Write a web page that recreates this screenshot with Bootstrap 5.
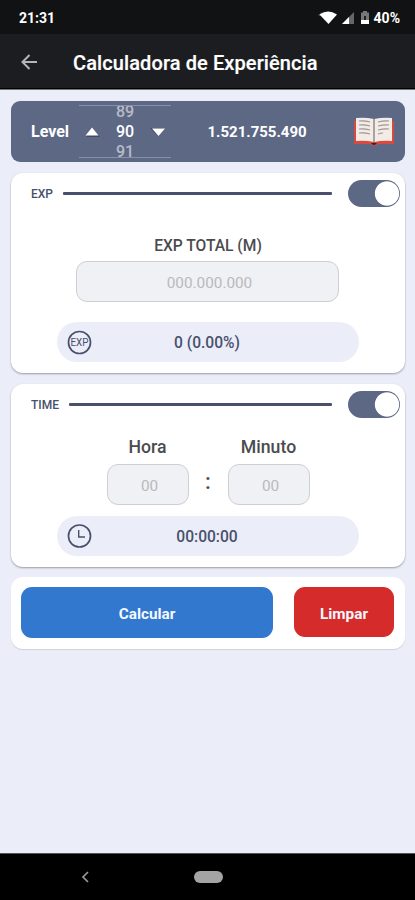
<!DOCTYPE html>
<html lang="pt-BR">
<head>
<meta charset="utf-8">
<meta name="viewport" content="width=device-width, initial-scale=1">
<title>Calculadora de Experiência</title>
<link href="https://cdn.jsdelivr.net/npm/bootstrap@5.3.0/dist/css/bootstrap.min.css" rel="stylesheet">
<style>
:root{--slate:#5d6885;--ink:#48506c;--haze:#ebedf9}
body{font-family:Roboto,"Liberation Sans",sans-serif;background:var(--haze);height:900px;overflow:hidden;line-height:1}
svg{display:block;flex:none}
.status{height:34px;background:#111213;padding:2px 15px 0 19px;font-size:14px;font-weight:700}
.battery{margin:0 3px 0 4px}
.appbar{height:56px;background:#1b1d20;border-bottom:1px solid #777;box-shadow:inset 0 -1px #000;padding:0 20px}
.appbar h1{font-size:20px;font-weight:500;margin:0 0 0 33px;padding-top:2px;letter-spacing:.1px;-webkit-text-stroke:.2px}
main{padding:11px 10px 0 11px}
.panel{border:0;border-radius:12px;box-shadow:0 1px 2px rgba(0,0,0,.35)}
.level{height:61px;background:var(--slate);border-radius:9px;padding:0 10px 0 20px;margin-bottom:11px;font-weight:700}
.level-name{padding-top:1px}
.wheel{width:92px;height:53px;margin-left:10px;font-weight:500;font-size:16px;border-top:1px solid #8790a8;border-bottom:1px solid #8790a8}
.digits{height:51px;width:24px;overflow:hidden;padding-top:1px}
.digits span{flex:none;height:20px;line-height:20px}
.dim{opacity:.55}
.total{font-size:15px;width:112px;margin-left:30px;padding-top:2px}
.exp{height:200px;margin-bottom:11px}
.time{height:183px;margin-bottom:10px}
.actions{height:72px;padding:10px 11px 0 10px;box-shadow:0 1px 1px rgba(0,0,0,.12)}
.headrow{height:40px;padding:0 5px 0 20px;color:var(--ink);font-size:12px;font-weight:500}
.headrow span{padding-top:1px}
.rule{height:3px;background:var(--ink);border-radius:1px;margin:0 16px 0 10px}
.toggle.form-check-input{width:52px;height:27px;margin:0;border:0;background:var(--slate);flex:none;appearance:none;border-radius:14px;padding:1px}
.toggle.form-check-input:checked{background:radial-gradient(circle at 39px 13.5px,#fff 11.7px,var(--slate) 12.6px)}
.lbl{font-size:16px;font-weight:500;color:#4b4b4e}
.exp .lbl{height:24px;margin-bottom:0;padding-top:2px;font-size:15.6px}
.field.form-control{height:41px;border:1.5px solid #cdcfd2;border-radius:11px;background:#f0f1f4;text-align:center;font-size:15.3px;padding:2px 4px 0 8px;color:#777}
.field::placeholder{color:#b8babd;opacity:1}
.wide{width:263px}
.exp .field{margin-left:65px}
.narrow{width:82px}
.time .pair{margin-top:15px}
.time .big{font-size:17.7px;height:25px}
.time .colon{width:39px;height:41px;font-size:22px;line-height:36px}
.result{width:302px;height:40px;margin-left:46px;background:var(--haze);color:var(--ink);font-size:15.6px;font-weight:500;padding-left:9px}
.result output{width:230px;padding-top:3px}
.exp .result{margin-top:20px}
.time .result{margin-top:11px}
.go,.wipe{border:0;border-radius:11px;font-size:15.3px;font-weight:700;color:#f5f8ff;padding:4px 0 0}
.go{width:252px;height:51px;background:#3178ce}
.wipe{width:100px;height:50px;background:#d52b2b}
.go:hover,.wipe:hover{color:#fff}
.softnav{height:47px;background:#000;border-top:1px solid #555}
.backkey{margin:0 103px 0 80px}
.homekey{width:29px;height:12px;background:#a4a4a4}
</style>
<script src="https://cdn.jsdelivr.net/npm/bootstrap@5.3.0/dist/js/bootstrap.bundle.min.js"></script>
</head>
<body class="d-flex flex-column">
<div class="status d-flex align-items-center text-white flex-shrink-0">
  <span class="me-auto">21:31</span>
  <svg width="20" height="16" viewBox="0 0 20 16"><path d="M0 5.500 4 2v4z" fill="#555"/><path d="M1.500 4.500Q10-1.500 19 4.500L10.500 14z" fill="#fff"/></svg>
  <svg class="ms-1" width="12" height="13" viewBox="0 0 12 13"><path d="M12 0v12H0z" fill="#666"/><path d="M7 5v7H0z" fill="#fff"/></svg>
  <svg class="battery" width="13" height="14" viewBox="0 0 13 14"><path d="M5 0h4v1.500h2V13H3V1.500h2z" fill="#777"/><path d="M3 9h8v4H3z" fill="#fff"/><path d="M6 5h2v4H6z" fill="#222"/></svg>
  <span>40%</span>
</div>
<header class="appbar d-flex align-items-center text-white flex-shrink-0">
  <svg width="20" height="18" viewBox="0 0 20 18" fill="none" stroke="#b5b5b7" stroke-width="2"><path d="M17 9H2.500M9.500 2 2.500 9l7 7"/></svg>
  <h1>Calculadora de Experiência</h1>
</header>
<main class="flex-grow-1">
  <section class="level d-flex align-items-center text-white">
    <span class="level-name">Level</span>
    <div class="wheel d-flex align-items-center justify-content-between">
      <svg class="ms-1" width="18" height="12" viewBox="0 0 18 12"><path d="M3 11h14L10 3z" fill="#444b60"/><path d="M2.500 9.500h13L9 1.500z" fill="#fff"/></svg>
      <div class="digits d-flex flex-column justify-content-center align-items-center"><span class="dim">89</span><span>90</span><span class="dim">91</span></div>
      <svg class="me-1" width="18" height="12" viewBox="0 0 18 12"><path d="M1 2h14l-6 8z" fill="#444b60"/><path d="M3 2.500h13L9.500 10z" fill="#fff"/></svg>
    </div>
    <span class="total text-center">1.521.755.490</span>
    <svg class="ms-auto" width="42" height="32" viewBox="0 0 42 32">
      <path d="M1 5h40v23H25q-4 3-8 0H1z" fill="#d84a40"/>
      <path d="M3 2q9-1 18 1 9-2 18-1v23q-9-1-18 1-9-2-18-1z" fill="#f3ebe5"/>
      <path d="M18 27h6q-3 4-6 0z" fill="#4c1820"/>
      <path d="M21 3v23" stroke="#928c8a" stroke-width="1.500"/>
      <path d="M6 5q6-.5 11 1M6 9q6-.5 11 1M6 13q6-.5 11 1M6 17q6-.5 11 1M25 6q6-1.500 11-1M25 10q6-1.500 11-1M25 14q6-1.500 11-1M25 18q3-1 5-1" stroke="#9c9694" stroke-width="1.200" fill="none"/>
    </svg>
  </section>

  <section class="panel exp card">
    <div class="headrow d-flex align-items-center"><span>EXP</span><div class="rule flex-grow-1"></div><input class="toggle form-check-input" type="checkbox" role="switch" aria-label="EXP" checked></div>
    <label class="lbl text-center mt-4" for="total">EXP TOTAL (M)</label>
    <input id="total" class="field wide form-control" placeholder="000.000.000">
    <div class="result rounded-pill d-flex align-items-center">
      <svg width="26" height="26" viewBox="0 0 26 26"><circle cx="13.500" cy="13.500" r="11" fill="none" stroke="#48506c" stroke-width="1.700"/><text x="13.500" y="17" text-anchor="middle" font-size="10" font-weight="400" fill="#48506c" textLength="18" lengthAdjust="spacingAndGlyphs">EXP</text></svg>
      <output class="text-center">0 (0.00%)</output>
    </div>
  </section>

  <section class="panel time card">
    <div class="headrow d-flex align-items-center"><span>TIME</span><div class="rule flex-grow-1"></div><input class="toggle form-check-input" type="checkbox" role="switch" aria-label="TIME" checked></div>
    <div class="pair d-flex justify-content-center align-items-end">
      <div class="d-flex flex-column align-items-center"><label class="lbl big" for="hora">Hora</label><input id="hora" class="field narrow form-control" placeholder="00"></div>
      <div class="colon lbl text-center">:</div>
      <div class="d-flex flex-column align-items-center"><label class="lbl big" for="minuto">Minuto</label><input id="minuto" class="field narrow form-control" placeholder="00"></div>
    </div>
    <div class="result rounded-pill d-flex align-items-center">
      <svg width="26" height="26" viewBox="0 0 26 26" fill="none" stroke="#48506c"><circle cx="13.500" cy="13" r="11" stroke-width="1.700"/><path d="M12.700 7v7H19" stroke-width="1.400"/></svg>
      <output class="text-center">00:00:00</output>
    </div>
  </section>

  <section class="panel actions card flex-row justify-content-between align-items-start">
    <button class="go btn">Calcular</button>
    <button class="wipe btn">Limpar</button>
  </section>
</main>
<nav class="softnav d-flex align-items-center flex-shrink-0">
  <svg class="backkey" width="11" height="12" viewBox="0 0 11 12" fill="none" stroke="#999" stroke-width="1.700"><path d="M8 1 3 6l5 5"/></svg>
  <div class="homekey rounded-pill"></div>
</nav>
</body>
</html>
